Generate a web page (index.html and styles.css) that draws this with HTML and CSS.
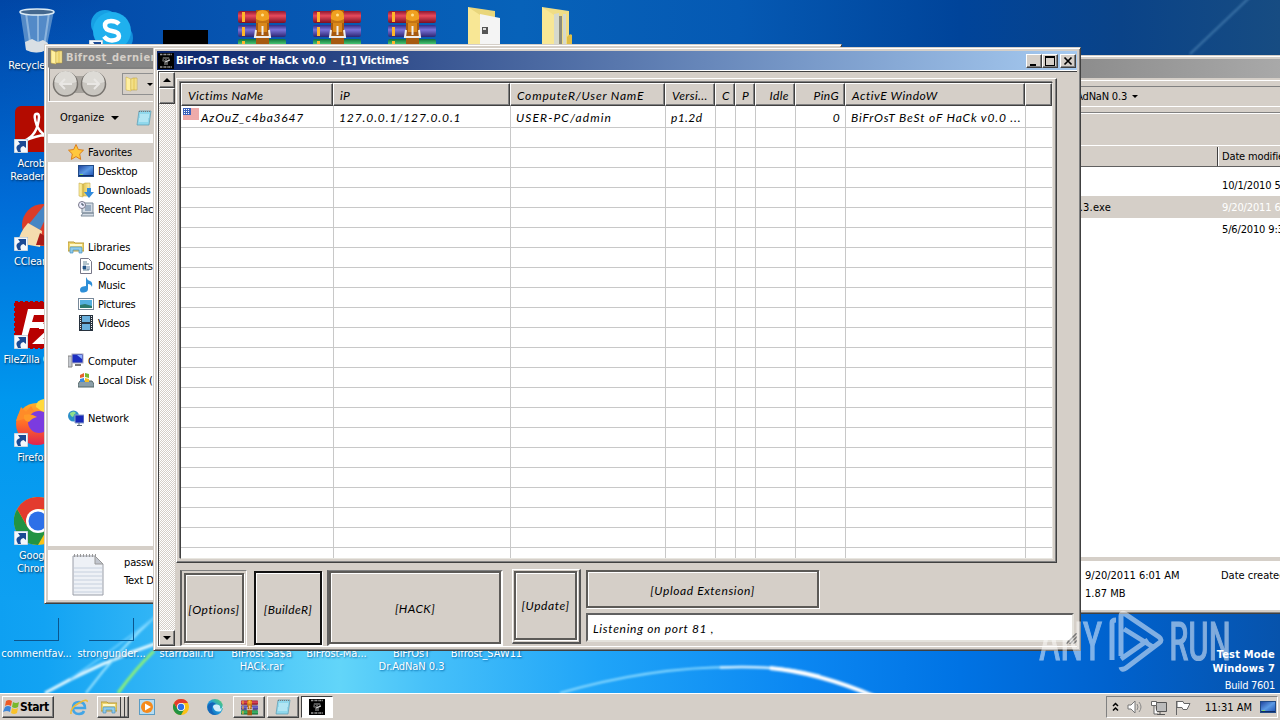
FILE: index.html
```
<!DOCTYPE html>
<html>
<head>
    <meta charset='utf-8'>
    <title>Desktop</title>
    <link rel="stylesheet" href="styles.css">
</head>
<body>
    <svg width="0" height="0" class="sprite">
        <defs>
            <linearGradient id="gold" x1="0" x2="1"><stop offset="0" stop-color="#fff3a8"/><stop offset=".5" stop-color="#e8cd62"/><stop offset="1" stop-color="#fbeeb0"/></linearGradient>
            <linearGradient id="red" x1="0" x2="0" y1="0" y2="1"><stop offset="0" stop-color="#8d1630"/><stop offset=".4" stop-color="#e84a5c"/><stop offset="1" stop-color="#7c0f24"/></linearGradient>
            <linearGradient id="blue" x1="0" x2="0" y1="0" y2="1"><stop offset="0" stop-color="#332c86"/><stop offset=".4" stop-color="#7a72d8"/><stop offset="1" stop-color="#2c2572"/></linearGradient>
            <linearGradient id="green" x1="0" x2="0" y1="0" y2="1"><stop offset="0" stop-color="#0f7038"/><stop offset=".4" stop-color="#43c070"/><stop offset="1" stop-color="#0c5c2c"/></linearGradient>
            <linearGradient id="screen" x1="0" x2="1" y1="0" y2="1"><stop offset="0" stop-color="#1c3f9c"/><stop offset=".5" stop-color="#5c9ae4"/><stop offset="1" stop-color="#1a4cae"/></linearGradient>
            <linearGradient id="fox" x1="0" x2="0" y1="0" y2="1"><stop offset="0" stop-color="#ffb02a"/><stop offset=".5" stop-color="#ff6a28"/><stop offset="1" stop-color="#e0234e"/></linearGradient>
            <linearGradient id="edge" x1="0" x2="1" y1="1" y2="0"><stop offset="0" stop-color="#0c59a4"/><stop offset=".5" stop-color="#1e9be0"/><stop offset="1" stop-color="#5fd85c"/></linearGradient>
        </defs>
        <symbol id="rar" viewBox="0 0 48 48">
            <rect x="0" y="2" width="48" height="12" rx="2" fill="url(#red)"/>
            <rect x="0" y="16" width="48" height="12" rx="2" fill="url(#blue)"/>
            <rect x="0" y="30" width="48" height="12" rx="2" fill="url(#green)"/>
            <path d="M4 3h3v10H4zM4 18h3v9H4zM4 32h3v9H4z" fill="#ffb62a"/>
            <rect x="18" y="1" width="13" height="43" fill="#a65a10"/>
            <path d="M18 7q0-6 6.500-6t6.500 6v7H18z" fill="#f0a020"/>
            <path d="M18 10q6.500 4 13 0v4H18z" fill="#c47413"/>
            <circle cx="24.500" cy="6" r="1.500" fill="#ffe08a"/>
            <rect x="20" y="14" width="9" height="9" fill="#d9881b"/>
            <path d="M18 21l-1 7h15l-1-7M24.500 17v9" fill="none" stroke="#eee" stroke-width="2"/>
        </symbol>
        <symbol id="arrow" viewBox="0 0 14 14">
            <rect width="14" height="14" fill="#f4f8fc" stroke="#9db4c8"/>
            <path d="M4 13Q0 7 6 5L4 2h8v7l-2.500-2Q5 8 7 13z" fill="#1b4a94"/>
        </symbol>
        <symbol id="folder" viewBox="0 0 16 16">
            <path d="M2 1l5 2v12l-5-1z" fill="#fff0a0" stroke="#c9a93a" stroke-width=".5"/>
            <path d="M7 3l2-1h4v12H7z" fill="url(#gold)" stroke="#b8982c" stroke-width=".5"/>
        </symbol>
        <symbol id="library" viewBox="0 0 16 16">
            <path d="M0 3h6l1 1h9v8H0z" fill="#eed56c" stroke="#b99a38"/>
            <path d="M2 5h12v2H2z" fill="#fff9cc"/>
            <path d="M2 14V9q0-1 1-1h10q1 0 1 1v5h-3v-3H5v3z" fill="#8ecbea" stroke="#4a94c4" stroke-width=".7"/>
        </symbol>
        <symbol id="monitor" viewBox="0 0 16 16">
            <rect x=".5" y="2.500" width="15" height="11" fill="url(#screen)" stroke="#214a86"/>
            <path d="M1 12h14v1H1z" fill="#0c2a68"/><path d="M2 11h3v1H2z" fill="#7fd36c"/>
        </symbol>
        <symbol id="computer" viewBox="0 0 16 16">
            <path d="M0 3h4v11H0z" fill="#c4c8ce" stroke="#888"/>
            <rect x="4" y="1" width="11" height="9" fill="#1c2ec0" stroke="#aab"/>
            <path d="M9 2h5v4z" fill="#8db0ff"/><path d="M7 11h6v2H7z" fill="#777"/>
        </symbol>
        <symbol id="network" viewBox="0 0 16 16">
            <circle cx="5.500" cy="6" r="5.500" fill="#2b8fc8"/><path d="M2 3q4-3 6 0-2 1-3 4Q2 6 2 3" fill="#8fe08a"/>
            <path d="M7 5h9v8H7z" fill="#1828b8" stroke="#8ba0c8"/><path d="M11 13v3m-2-.5h5" stroke="#567"/>
        </symbol>
        <symbol id="notepad" viewBox="0 0 16 16">
            <path d="M3 1h12l-2 14H1z" fill="#90d8ec" stroke="#5b9ab0" stroke-width=".7"/>
            <path d="M4 5h9M4 7h9M3 9h9M3 11h9" stroke="#e6fbff" stroke-width=".8"/>
            <path d="M3 1.500h12" stroke="#777" stroke-dasharray="1 1"/>
        </symbol>
        <symbol id="chrome" viewBox="0 0 48 48">
            <circle cx="24" cy="24" r="24" fill="#fbc116"/>
            <path d="M3.200 12A24 24 0 0 1 44.800 12H24z" fill="#e33b2e"/>
            <path d="M3.200 12A24 24 0 0 0 24 48L34.400 30 24 24 13.600 30z" fill="#229342"/>
            <path d="M3.200 12L13.600 30 24 12z" fill="#e33b2e"/>
            <circle cx="24" cy="24" r="12" fill="#fff"/><circle cx="24" cy="24" r="9.500" fill="#2d70e8"/>
        </symbol>
        <symbol id="skull" viewBox="0 0 16 16">
            <rect width="16" height="16" fill="#000"/>
            <path d="M2 1.500h12M2 14h12" stroke="#999" stroke-width="1.500" stroke-dasharray="2 .6 1 .5"/>
            <path d="M5 4h6l1 3-2 2v3H6V9L4 8z" fill="#555"/><path d="M6 6h1v1H6zM9 6h1v1H9z" fill="#000"/>
            <path d="M7 9l5-2" stroke="#ddd"/>
        </symbol>
    </svg>

    <div class="desktop">
        <svg class="wallpaper" viewBox="0 0 1280 720">
            <defs><filter id="soft"><feGaussianBlur stdDeviation="1.2"/></filter></defs>
            <g fill="none" filter="url(#soft)">
                <path d="M45 693Q100 662 160 642" stroke="#dff8ff" stroke-width="3"/>
                <path d="M86 693Q118 650 160 612" stroke="#9fe6ff" stroke-width="2"/>
                <path d="M118 693Q136 668 154 651" stroke="#8af07a" stroke-width="3"/>
                <path d="M70 679Q120 645 156 616" stroke="#62ccff" stroke-width="2"/>
                <path d="M560 693Q650 667 735 667" stroke="#8fdcff" stroke-width="2"/>
                <path d="M720 667.500Q780 665 820 676" stroke="#d8f2ff" stroke-width="2.500"/>
                <path d="M770 668Q820 673 876 697" stroke="#fff" stroke-width="4"/>
                <path d="M1190 54L1250 -3" stroke="#3d74a8" stroke-width="2"/>
            </g>
        </svg>

        <div class="shortcut bin">
            <svg width="38" height="46" viewBox="0 0 38 46">
                <path d="M2 3L8 42q10 5 20 0L36 3z" fill="#6f9fd0" fill-opacity=".75"/>
                <path d="M8 5l5 36M20 5v38M31 5l-5 34" stroke="#c4ddf2" stroke-width="2" opacity=".5"/>
                <ellipse cx="19" cy="4" rx="17" ry="3" fill="#44688e" stroke="#dcebf5" stroke-width="1.500"/>
                <path d="M7 34l7-3 6 3 5-2 5 3-2 7q-9 5-20 0z" fill="#d9dfe4"/>
            </svg>
            <span>Recycle Bin</span>
        </div>
        <div class="shortcut acrobat">
            <svg width="48" height="48" viewBox="0 0 48 48">
                <rect x="1" y="1" width="46" height="46" rx="6" fill="#b30b00"/>
                <path d="M10 36q14-6 15-24 0-4-3-3t1 12q6 12 17 11-10-5-30 4" fill="none" stroke="#fff" stroke-width="2.500"/>
            </svg>
            <svg class="arrow"><use href="#arrow"/></svg>
            <span>Acrobat Reader DC</span>
        </div>
        <div class="shortcut ccleaner">
            <svg width="48" height="48" viewBox="0 0 48 48">
                <circle cx="29" cy="22" r="21" fill="#dc3c28"/><path d="M32 0l6 2-12 25-11-6z" fill="#4786c4"/>
                <path d="M14 20l14 8-2 16-22-4q1-10 10-20" fill="#f4dcae"/><path d="M26 30l18 12H22z" fill="#a81c18"/>
            </svg>
            <svg class="arrow"><use href="#arrow"/></svg>
            <span>CCleaner</span>
        </div>
        <div class="shortcut filezilla">
            <svg width="48" height="48" viewBox="0 0 48 48">
                <rect x="1" y="1" width="46" height="46" fill="#b80000" stroke="#b80000" stroke-width="2" stroke-dasharray="3 2"/>
                <path d="M7 37L14 8h24l-2 6H20l-2 7h12l-2 6H16l-3 10zM25 23h20L29 38h14v5H18l16-15h-9z" fill="#fff"/>
            </svg>
            <svg class="arrow"><use href="#arrow"/></svg>
            <span>FileZilla Client</span>
        </div>
        <div class="shortcut firefox">
            <svg width="48" height="48" viewBox="0 0 48 48">
                <circle cx="23" cy="25" r="21" fill="url(#fox)"/><path d="M2 22L7 8l5 5 5-6 6 10z" fill="#ff8b28"/>
                <path d="M22 8q0-7 8-8 12 10 14 24z" fill="#ffd83c"/><circle cx="25" cy="23" r="11" fill="#7b3be0"/>
                <path d="M10 16q7-2 13 2-5 1-8 5-6-1-5-7" fill="#ff9a28"/>
            </svg>
            <svg class="arrow"><use href="#arrow"/></svg>
            <span>Firefox</span>
        </div>
        <div class="shortcut google">
            <svg width="48" height="48"><use href="#chrome"/></svg>
            <svg class="arrow"><use href="#arrow"/></svg>
            <span>Google Chrome</span>
        </div>
        <div class="shortcut skype">
            <svg width="42" height="42" viewBox="0 0 42 42">
                <circle cx="14" cy="14" r="14" fill="#17a0e4"/><circle cx="28" cy="28" r="14" fill="#1390dc"/><circle cx="21" cy="21" r="19" fill="#1fb0ee"/>
                <path d="M28 14q-3-3-8-3-6 0-6 4.500t7 5.500 7 5-7 4.500q-5 0-8-4" fill="none" stroke="#fff" stroke-width="4.500"/>
            </svg>
            <svg class="arrow"><use href="#arrow"/></svg>
        </div>
        <div class="shortcut black"></div>
        <svg class="shortcut rar1"><use href="#rar"/></svg>
        <svg class="shortcut rar2"><use href="#rar"/></svg>
        <svg class="shortcut rar3"><use href="#rar"/></svg>
        <svg class="shortcut folder1" viewBox="0 0 34 48">
            <path d="M1 0l27 4v44H1z" fill="#e9d67c"/><path d="M13 7l20 4v37H13z" fill="#f4f4f4"/><path d="M1 0l12 8v40H1z" fill="#f8e795"/>
            <path d="M15 20h6v7h-6z" fill="#555"/><path d="M16 21h3v2h-3z" fill="#ddd"/>
        </svg>
        <svg class="shortcut folder2" viewBox="0 0 34 48">
            <path d="M1 0l27 4v44H1z" fill="#f0dd85"/><path d="M13 7l5-1v42h-5zM22 7h3v41h-3z" fill="#d6d9cc"/><path d="M18 9h3v39h-3z" fill="#8c8c7c"/>
            <path d="M1 0l12 8v40H1z" fill="#f8e795"/><path d="M26 30q3-4 5-2v20h-5z" fill="#e0bd45"/>
        </svg>
        <div class="shadow-icon first"></div>
        <div class="shadow-icon second"></div>
        <div class="labels">
            <span>commentfav...</span>
            <span>strongunder...</span>
            <span>starrball.ru</span>
            <span>BiFrost Sa$a HACk.rar</span>
            <span>BiFrost-Ma...</span>
            <span>BiFrOsT Dr.AdNaN 0.3</span>
            <span>Bifrost_SAW11</span>
        </div>

        <div class="window explorer">
            <div class="titlebar inactive"><svg class="icon"><use href="#folder"/></svg>Bifrost_dernier</div>
            <div class="address">
                <svg width="58" height="28" viewBox="0 0 58 28">
                    <rect x="3" y="6" width="48" height="17" rx="8" fill="#a8a49e"/>
                    <circle cx="13.500" cy="14" r="12" fill="#c9c6c0" stroke="#77736e" stroke-width="1.500"/>
                    <circle cx="41.500" cy="14" r="12" fill="#c9c6c0" stroke="#77736e" stroke-width="1.500"/>
                    <path d="M2.500 12a11 11 0 0 1 22 0q-11 4-22 0M30.500 12a11 11 0 0 1 22 0q-11 4-22 0" fill="#dddbd6"/>
                    <path d="M20 14H8m5-5l-5 5 5 5M35 14h12m-5-5l5 5-5 5" fill="none" stroke="#e9e7e4" stroke-width="2"/>
                </svg>
                <div class="path"><svg class="icon"><use href="#folder"/></svg><i class="caret"></i></div>
            </div>
            <div class="tools"><span>Organize</span><i class="caret wide"></i><svg class="icon"><use href="#notepad"/></svg></div>
            <div class="nav">
                <div class="group selected"><svg class="icon" viewBox="0 0 16 16"><path d="M8 .5l2.300 5 5.200.7-3.800 3.700 1 5.500L8 12.600l-4.700 2.800 1-5.500L.5 6.200l5.200-.7z" fill="#ffc83c" stroke="#dd7f1c"/></svg><span>Favorites</span></div>
                <div><svg class="icon"><use href="#monitor"/></svg><span>Desktop</span></div>
                <div><svg class="icon" viewBox="0 0 16 16"><path d="M1 1l4 1v13l-4-1zM5 2l2-1h5v13H5z" fill="url(#gold)" stroke="#b8982c" stroke-width=".5"/><path d="M9 6h4v4h3l-5 6-5-6h3z" fill="#328bdc"/></svg><span>Downloads</span></div>
                <div><svg class="icon" viewBox="0 0 16 16"><path d="M4 2h11v10H4zM5 12h11v3H3z" fill="#d3dbe4" stroke="#7d8b9a"/><path d="M7 5h6M7 7h6M7 9h6" stroke="#587698"/><circle cx="4" cy="4" r="3.500" fill="#eef" stroke="#778"/><path d="M4 2v2h2" fill="none" stroke="#345"/></svg><span>Recent Places</span></div>
                <div class="gap"></div>
                <div class="group"><svg class="icon"><use href="#library"/></svg><span>Libraries</span></div>
                <div><svg class="icon" viewBox="0 0 16 16"><path d="M2.500.5h8l3 3v12h-11z" fill="#fff" stroke="#778"/><path d="M5 4h4M5 6h6M5 12h6" stroke="#689"/><path d="M5 8h3v3H5zM9 9h3M9 11h3" fill="#258" stroke="#258" stroke-width=".7"/></svg><span>Documents</span></div>
                <div><svg class="icon" viewBox="0 0 16 16"><path d="M8 0q1 3 4 4t2 6q-1-3-4-3v5q0 3-4 3.500T2 13t3-3.500l3-.5z" fill="#2d8fd8"/></svg><span>Music</span></div>
                <div><svg class="icon" viewBox="0 0 16 16"><rect x=".5" y="2.500" width="15" height="11" fill="#fff" stroke="#789"/><path d="M2 4h12v8H2z" fill="#54b0e0"/><path d="M2 9l5-1 7 2v2H2z" fill="#2c7a6c"/></svg><span>Pictures</span></div>
                <div><svg class="icon" viewBox="0 0 16 16"><rect x="1" y="0" width="14" height="16" fill="#27323e"/><path d="M4 1h8v6H4zM4 9h8v6H4z" fill="#6ab0dc"/><path d="M2.500 1v14M13.500 1v14" stroke="#eee" stroke-dasharray="1 1"/></svg><span>Videos</span></div>
                <div class="gap"></div>
                <div class="group"><svg class="icon"><use href="#computer"/></svg><span>Computer</span></div>
                <div><svg class="icon" viewBox="0 0 16 16"><path d="M2 9h12l2 3v3H0v-3z" fill="#8a9ea8" stroke="#566"/><path d="M2 3l4-2v4l-4 1z" fill="#e8622c"/><path d="M7 1l4 1v4L7 5z" fill="#7cb82f"/><path d="M2 7l4-1v4H2z" fill="#3a8ae0"/><path d="M7 6l4 1v3H7z" fill="#f8c020"/></svg><span>Local Disk (C:)</span></div>
                <div class="gap"></div>
                <div class="group"><svg class="icon"><use href="#network"/></svg><span>Network</span></div>
            </div>
            <div class="details">
                <svg width="32" height="42" viewBox="0 0 32 42"><path d="M1 2h22l8 8v31H1z" fill="#eef1f6" stroke="#9a9ea8"/><path d="M23 2v8h8z" fill="#c2c6ce" stroke="#999"/><path d="M2 14h28M2 18h28M2 22h28M2 26h28M2 30h28M2 34h28M2 38h28" stroke="#c6d0de"/><path d="M2 1.500h22" stroke="#999" stroke-width="3" stroke-dasharray="1 2"/></svg>
                <div><p>password</p><p>Text Document</p></div>
            </div>
        </div>

        <div class="window folder-window">
            <div class="titlebar inactive"></div>
            <div class="address"><span>Dr.AdNaN 0.3</span><i class="caret"></i></div>
            <div class="tools"></div>
            <div class="columns"><div></div><div>Date modified</div></div>
            <div class="files">
                <div><span></span><span>10/1/2010 5:12 PM</span></div>
                <div class="selected"><span>Dr.AdNaN 0.3.exe</span><span>9/20/2011 6:01 AM</span></div>
                <div><span></span><span>5/6/2010 9:30 AM</span></div>
            </div>
            <div class="details">
                <div><p>9/20/2011 6:01 AM</p><p>1.87 MB</p></div>
                <div><p>Date created</p></div>
            </div>
        </div>

        <div class="window main">
            <div class="titlebar">
                <svg class="icon"><use href="#skull"/></svg>
                <span>BiFrOsT BeSt oF HaCk v0.0  - [1] VictimeS</span>
                <div class="controls">
                    <svg class="raised" viewBox="0 0 12 10"><path d="M2 8h6v2H2z"/></svg>
                    <svg class="raised" viewBox="0 0 12 10"><path d="M1 0h10v10H1zM2 2v7h8V2z" fill-rule="evenodd"/></svg>
                    <svg class="raised close" viewBox="0 0 12 10"><path d="M2.500 1.500l7 7m0-7l-7 7" stroke="#000" stroke-width="1.700"/></svg>
                </div>
            </div>
            <div class="client">
                <div class="scroll">
                    <div class="raised step"><i class="up"></i></div>
                    <div class="raised thumb"></div>
                    <div class="raised step"><i class="caret wide"></i></div>
                </div>
                <div class="content">
                    <div class="panel">
                        <div class="list">
                            <div class="list-head">
                                <div class="w1">Victims NaMe</div><div>iP</div><div class="w2">ComputeR/User NamE</div><div class="w3">Versi...</div><div>C</div><div>P</div><div class="right">Idle</div><div class="right">PinG</div><div class="w4">ActivE WindoW</div><div></div>
                            </div>
                            <div class="row">
                                <div class="name"><svg width="16" height="12" viewBox="0 0 16 12"><rect width="16" height="12" fill="#fff"/><path d="M0 1h16M0 3h16M0 5h16M0 7h16M0 9h16M0 11h16" stroke="#dd5656"/><rect width="8" height="7" fill="#3c62bc"/><path d="M1 1.500h6M1 3.500h6M1 5.500h6" stroke="#fff" stroke-dasharray="1 1"/></svg><span>AzOuZ_c4ba3647</span></div>
                                <div class="ip">127.0.0.1/127.0.0.1</div><div class="user">USER-PC/admin</div><div class="ver">p1.2d</div><div></div><div></div><div></div><div class="right">0</div><div class="active">BiFrOsT BeSt oF HaCk v0.0 ...</div><div></div>
                            </div>
                            <div class="rows"></div>
                        </div>
                    </div>
                    <div class="actions">
                        <div class="well options"><div class="button">[Options]</div></div>
                        <div class="button builder">[BuildeR]</div>
                        <div class="well hack"><div class="button">[HACK]</div></div>
                        <div class="update"><div class="button">[Update]</div></div>
                        <div class="status">
                            <div class="button upload">[Upload Extension]</div>
                            <div class="listen">Listening on port 81 ,</div>
                        </div>
                    </div>
                </div>
                <svg class="grip" viewBox="0 0 12 12"><path d="M0 12L12 0M4 12l8-8M8 12l4-4" stroke="#777" stroke-width="1.700"/></svg>
            </div>
        </div>

        <svg class="watermark" viewBox="0 0 194 64">
            <g fill="#fff" stroke="#fff" stroke-width="1.200" font-family="Roboto" font-size="53" opacity=".5">
                <text x="1" y="50" textLength="63" lengthAdjust="spacingAndGlyphs">ANY</text>
                <text x="131" y="50" textLength="62" lengthAdjust="spacingAndGlyphs">RUN</text>
            </g>
            <path d="M74 50V13q0-3 4-3M83 46V6q0-4 4-2l34 23q4 3 0 6L88 58q-4 3-5-1M86 19l29 18M83 49l27-19" fill="none" stroke="#fff" stroke-width="5" opacity=".5"/>
        </svg>
        <div class="build"><b>Test Mode</b><b>Windows 7</b><span>Build 7601</span></div>
    </div>

    <div class="taskbar">
        <div class="raised start"><svg width="17" height="16" viewBox="0 0 17 16"><path d="M3 2q3-2 6 0L8 7Q5 5 2 7z" fill="#ee5a24"/><path d="M10 3q3 2 6 0l-1 5q-3 2-6 0z" fill="#78b82c"/><path d="M2 8q3-2 6 0l-1 5Q4 11 0 13z" fill="#3d86d8"/><path d="M9 9q3 2 6 0l-1 5q-3 2-6 0z" fill="#f9c22a"/></svg>Start</div>
        <div class="task"><svg width="18" height="18" viewBox="0 0 18 18"><path d="M4 10h11q0-6-6-6T3 10t6 6q4 0 5-3" fill="none" stroke="#42a5e6" stroke-width="2.500"/><path d="M1 16Q0 10 9 5t8-1" fill="none" stroke="#eebb35" stroke-width="1.500"/></svg></div>
        <div class="task raised stacked"><svg class="icon"><use href="#library"/></svg><i></i><i></i></div>
        <div class="task"><svg width="16" height="16" viewBox="0 0 16 16"><rect x=".5" y=".5" width="15" height="15" fill="#b6dcf2" stroke="#5a9cc4"/><circle cx="8" cy="8" r="6" fill="#f58a1c"/><path d="M6 4.500l6 3.500-6 3.500z" fill="#fff"/></svg></div>
        <div class="task"><svg width="16" height="16"><use href="#chrome"/></svg></div>
        <div class="task"><svg width="16" height="16" viewBox="0 0 16 16"><circle cx="8" cy="8" r="8" fill="url(#edge)"/><path d="M6 8q0-3 4-2.500t3 4l3-.5q0-1 0-3L14 12q-6 2-8-4" fill="#d4eefa"/><path d="M1 6q4-5 8-1-4 0-4 5t5 6Q0 16 1 6" fill="#1565b8"/></svg></div>
        <div class="task raised"><svg width="17" height="17" viewBox="0 0 48 44"><use href="#rar" width="48" height="48"/></svg></div>
        <div class="task raised"><svg class="icon"><use href="#notepad"/></svg></div>
        <div class="task pressed"><svg class="icon"><use href="#skull"/></svg></div>
        <div class="tray">
            <svg width="7" height="10" viewBox="0 0 7 10"><path d="M1 4l2.500-2.500L6 4M1 8.500L3.500 6 6 8.500" fill="none" stroke="#000" stroke-width="1.500"/></svg>
            <svg width="16" height="14" viewBox="0 0 16 14"><path d="M1 5h3l4-4v12L4 9H1z" fill="#fff" stroke="#777"/><path d="M10 4q2 3 0 6M12 2q4 5 0 10" fill="none" stroke="#888"/></svg>
            <svg width="16" height="15" viewBox="0 0 16 15"><path d="M5.500 2.500h10v9h-10zM9 12v2.500M6 14.500h8" fill="#bbb" stroke="#555"/><path d="M.5 1.500h5v4h-5zM3 6v8h4" fill="#fff" stroke="#666"/></svg>
            <svg width="16" height="15" viewBox="0 0 16 15"><path d="M1.500 1v14M2 1.500h6l1 2h6l-3 6H8l-1-2H2z" fill="#fff" stroke="#666"/></svg>
            <span>11:31 AM</span>
            <svg class="icon"><use href="#monitor"/></svg>
        </div>
    </div>
</body>
</html>
```
FILE: styles.css
```
* {
    box-sizing: border-box;
}
body {
    margin: 0;
    width: 1280px;
    height: 720px;
    overflow: hidden;
    font-family: "DejaVu Sans Condensed", "DejaVu Sans", sans-serif;
    font-stretch: condensed;
    font-size: 11px;
    letter-spacing: -0.15px;
    color: #000;
}
p {
    margin: 0;
}
svg {
    display: block;
    flex: none;
}
.sprite {
    position: absolute;
}
.icon {
    width: 16px;
    height: 16px;
}
.desktop {
    position: relative;
    height: 693px;
    overflow: hidden;
    background:
        linear-gradient(90deg, #0ea0f2 0, #12a3f3 44px, #39b9f6 180px, #62d5f9 340px, #46c0f9 430px, #1fa4f8 600px, #0b87f2 800px, #0073e4 960px, #0062ce 1110px, #0753ac 1280px) 0 600px / 100% 93px no-repeat,
        linear-gradient(180deg, rgba(0,70,165,0) 0, rgba(0,112,220,.9) 200px, #0097ee 400px, #0ea0f2 600px) 0 0 / 100px 600px no-repeat,
        linear-gradient(90deg, #0046a6 0, #0654b0 230px, #0762b9 520px, #0559b3 740px, #00449a 960px, #0a4388 1120px, #174c82 1280px);
}
.wallpaper {
    position: absolute;
    width: 1280px;
    height: 720px;
}

/* desktop icons */
.shortcut {
    position: absolute;
    color: #fff;
    text-align: center;
    line-height: 13px;
    text-shadow: 1px 1px 2px #024;
}
.shortcut .arrow {
    position: absolute;
    left: 0;
    top: 34px;
    width: 14px;
    height: 14px;
}
.shortcut span {
    display: block;
    width: 74px;
    margin: 2px 0 0 -15px;
}
.bin { left: 18px; top: 8px; }
.bin span { margin: 5px 0 0 -19px; }
.acrobat { left: 14px; top: 105px; }
.acrobat span { margin-top: 4px; padding: 0 7px; }
.ccleaner { left: 14px; top: 203px; }
.ccleaner span { margin-top: 4px; }
.filezilla { left: 14px; top: 301px; }
.filezilla span { width: 84px; margin: 4px 0 0 -19px; }
.firefox { left: 14px; top: 399px; }
.firefox span { width: 68px; margin-top: 4px; }
.google { left: 14px; top: 497px; }
.google span { margin-top: 4px; padding: 0 13px; }
.skype { left: 91px; top: 10px; }
.skype .arrow { left: -2px; top: 30px; }
.black { left: 163px; top: 30px; width: 45px; height: 40px; background: #000; }
.rar1, .rar2, .rar3 { top: 9px; width: 48px; height: 48px; }
.rar1 { left: 238px; }
.rar2 { left: 313px; }
.rar3 { left: 388px; }
.folder1, .folder2 { top: 7px; width: 34px; height: 48px; }
.folder1 { left: 467px; }
.folder2 { left: 541px; }
.shadow-icon {
    position: absolute;
    top: 618px;
    width: 45px;
    height: 23px;
    border: solid #0b568e;
    border-width: 0 1px 1px 0;
}
.first { left: 14px; }
.second { left: 89px; }
.labels {
    position: absolute;
    left: -1px;
    top: 647px;
    display: flex;
    color: #fff;
    text-align: center;
    line-height: 13px;
    letter-spacing: -0.05px;
    text-shadow: 1px 1px 2px #0468a8;
}
.labels span {
    width: 75px;
}
.build {
    position: absolute;
    right: 5px;
    top: 648px;
    display: flex;
    flex-direction: column;
    align-items: flex-end;
    line-height: 15px;
    color: #fff;
    letter-spacing: 0.2px;
}
.build b {
    line-height: 14px;
}
.build span {
    margin-top: 2px;
    letter-spacing: -0.3px;
}

/* windows */
.window {
    position: absolute;
    background: #d5cfc8;
    border: 1px solid #d5cfc8;
    border-right-color: #404040;
    border-bottom-color: #404040;
    box-shadow: inset 1px 1px #fff, inset -1px -1px #808080;
    padding: 3px;
}
.titlebar {
    height: 19px;
    display: flex;
    align-items: center;
    color: #fff;
    font-weight: bold;
    white-space: pre;
    background: linear-gradient(90deg, #0a246a, #a6caf0);
}
.titlebar .icon {
    margin: 0 2px 0 1px;
}
.inactive {
    background: linear-gradient(90deg, #808080, #b8b8b8);
    color: #d5cfc8;
}
.raised {
    background: #d5cfc8;
    border: 1px solid #fff;
    border-right-color: #404040;
    border-bottom-color: #404040;
    box-shadow: inset -1px -1px #808080;
}
.caret {
    border: 3px solid transparent;
    border-top-color: #000;
    border-bottom: 0;
}
.wide {
    border-width: 4px 4px 0;
}
.explorer {
    left: 44px;
    top: 44px;
    width: 798px;
    height: 560px;
    display: flex;
    flex-direction: column;
}
.explorer .titlebar {
    padding-left: 1px;
    letter-spacing: 0.45px;
}
.explorer .titlebar .icon {
    margin: 0 1px 0 0;
}
.explorer .address {
    height: 35px;
    border: 1px solid #fff;
    border-top: 1px solid #808080;
    box-shadow: inset 1px 1px #808080;
    display: flex;
    align-items: center;
    gap: 12px;
    padding-left: 3px;
}
.path {
    display: flex;
    align-items: center;
    gap: 7px;
    height: 22px;
    flex: 1;
    border: 1px solid #909090;
    padding-left: 1px;
}
.explorer .tools {
    height: 32px;
    display: flex;
    align-items: center;
    padding-left: 12px;
    letter-spacing: 0;
}
.explorer .tools .wide {
    margin: 0 17px 0 7px;
}
.nav {
    height: 414px;
    padding-top: 9px;
    background: #fff;
}
.nav div {
    height: 19px;
    display: flex;
    align-items: center;
    gap: 4px;
    padding-left: 30px;
    letter-spacing: -0.2px;
}
.nav span {
    padding-top: 1px;
}
.nav .group {
    padding-left: 20px;
    letter-spacing: -0.05px;
}
.selected {
    background: #d5cfc8;
}
.details {
    flex: 1;
    display: flex;
    background: #fff;
    border-top: 4px solid #d5cfc8;
    line-height: 18px;
}
.explorer .details {
    padding: 4px 24px;
    gap: 20px;
}
.folder-window {
    left: 1000px;
    top: 55px;
    width: 300px;
    height: 559px;
    display: flex;
    flex-direction: column;
}
.folder-window .titlebar {
    background: linear-gradient(90deg, #828282, #ababab);
}
.folder-window .address {
    margin-top: 2px;
    height: 33px;
    display: flex;
    align-items: center;
    gap: 5px;
    border-top: 1px solid #fff;
    border-bottom: 1px solid #808080;
    box-shadow: inset 0 5px #d5cfc8, inset 0 6px #808080, inset 0 -5px #d5cfc8, inset 0 -6px #fff;
}
.folder-window .address span {
    width: 123px;
    text-align: right;
    letter-spacing: -0.2px;
}
.folder-window .tools {
    height: 32px;
    border-top: 1px solid #fff;
}
.columns {
    height: 22px;
    display: flex;
    align-items: center;
    border-top: 1px solid #fff;
    border-bottom: 1px solid #606060;
}
.columns div {
    width: 214px;
    height: 19px;
    flex: none;
    line-height: 20px;
    border-right: 1px solid #404040;
}
.columns div + div {
    border-left: 1px solid #fff;
    border-right: 0;
    padding-left: 3px;
}
.files {
    height: 390px;
    padding-top: 7px;
    background: #fff;
}
.files div {
    height: 22px;
    display: flex;
    align-items: center;
    white-space: nowrap;
}
.files span {
    width: 218px;
    flex: none;
}
.files span:first-child {
    padding-right: 111px;
    text-align: right;
    letter-spacing: 0.2px;
}
.files .selected span:last-child {
    color: #fff;
}
.folder-window .details {
    padding: 6px 0 0 81px;
    white-space: nowrap;
    letter-spacing: 0;
}
.folder-window .details div {
    width: 136px;
    flex: none;
}

/* main window */
.main {
    left: 153px;
    top: 47px;
    width: 928px;
    height: 604px;
}
.main .titlebar span {
    letter-spacing: 0.03px;
}
.controls {
    display: flex;
    margin-left: auto;
    padding-right: 1px;
}
.controls svg {
    width: 16px;
    height: 14px;
    padding: 1px;
}
.controls .close {
    margin-left: 2px;
}
.client {
    position: relative;
    height: 577px;
    display: flex;
    border: 1px solid #fff;
    border-right: 0;
    box-shadow: inset 1px 1px #404040;
    padding: 1px 0 0 1px;
}
.scroll {
    width: 16px;
    height: 574px;
    display: flex;
    flex-direction: column;
    background: repeating-conic-gradient(#fff 0 25%, #d5cfc8 0 50%) 0 0 / 2px 2px;
}
.step {
    height: 16px;
    display: flex;
    align-items: center;
    justify-content: center;
}
.thumb {
    height: 16px;
    margin-bottom: auto;
}
.up {
    border: 4px solid transparent;
    border-top: 0;
    border-bottom-color: #000;
}
.content {
    flex: 1;
    padding: 6px 0 0 1px;
    font-family: Lato, sans-serif;
    font-style: italic;
    font-size: 12px;
    letter-spacing: 0.4px;
}
.panel {
    width: 881px;
    height: 485px;
    border: 1px solid #fff;
    border-right-color: #404040;
    border-bottom-color: #404040;
    box-shadow: inset -1px -1px #808080;
    padding: 3px;
}
.list {
    width: 873px;
    height: 477px;
    border: 1px solid #404040;
    border-right: 1px solid #e8e6e0;
    border-bottom: 1px solid #e8e6e0;
    box-shadow: -1px -1px #808080;
    background: #fff;
}
.list-head, .row {
    display: grid;
    grid-template-columns: 152px 177px 155px 50px 20px 20px 40px 50px 180px 1fr;
    white-space: nowrap;
}
.list-head div {
    height: 23px;
    line-height: 23px;
    padding-left: 6px;
    background: #d5cfc8;
    border-top: 1px solid #fff;
    border-left: 1px solid #fff;
    border-right: 1px solid #404040;
    border-bottom: 1px solid #404040;
    box-shadow: inset -1px -1px #808080;
}
.list .right {
    text-align: right;
    padding-right: 5px;
}
.row {
    padding-left: 1px;
    border-bottom: 1px solid #c8c8c8;
}
.row div {
    height: 21px;
    line-height: 24px;
    padding-left: 5px;
    border-right: 1px solid #c8c8c8;
}
.row div:last-child {
    border-right: 0;
}
.row .name {
    display: flex;
    gap: 2px;
    padding: 2px 0 0 1px;
    line-height: 20px;
}
/* empty rows with the column lines drawn through them */
.rows {
    height: 430px;
    background:
        linear-gradient(90deg, transparent 152px, #c8c8c8 152px 153px, transparent 153px 329px, #c8c8c8 329px 330px, transparent 330px 484px, #c8c8c8 484px 485px, transparent 485px 534px, #c8c8c8 534px 535px, transparent 535px 554px, #c8c8c8 554px 555px, transparent 555px 574px, #c8c8c8 574px 575px, transparent 575px 614px, #c8c8c8 614px 615px, transparent 615px 664px, #c8c8c8 664px 665px, transparent 665px 844px, #c8c8c8 844px 845px, transparent 845px),
        repeating-linear-gradient(#fff 0 19px, #c8c8c8 19px 20px);
}
.w1 { letter-spacing: 0.45px; }
.w2 { letter-spacing: 0.8px; }
.w4 { letter-spacing: 0.55px; }
.name span { letter-spacing: 0.8px; }
.ip { letter-spacing: 0.9px; }
.user { letter-spacing: 1.1px; }
.active { letter-spacing: 0.85px; }
.actions {
    display: flex;
    align-items: flex-start;
    padding: 6px 0 0 4px;
    white-space: nowrap;
}
.well {
    height: 76px;
    margin-top: 1px;
    border: 1px solid #fff;
    border-left: 2px solid #606060;
    border-top: 1px solid #808080;
    padding: 2px;
}
.button {
    height: 100%;
    display: flex;
    justify-content: center;
    align-items: center;
    padding-top: 2px;
    border: 2px solid #5c5a57;
    box-shadow: inset 1px 1px #fff, 1px 1px #fff;
}
.options {
    width: 67px;
    letter-spacing: 0.6px;
}
.builder {
    width: 68px;
    height: 74px;
    margin: 2px 5px 0 7px;
    border: 2px solid #111;
}
.hack {
    width: 176px;
    padding: 0 1px 1px 0;
}
.update {
    width: 69px;
    height: 75px;
    margin: 0 5px 0 9px;
    border: 1px solid #fff;
    border-right: 2px solid #555;
    border-bottom: 2px solid #555;
    padding: 1px 2px 2px 1px;
}
.update .button {
    padding-top: 0;
    letter-spacing: 0.6px;
}
.status {
    width: 488px;
    padding-top: 1px;
}
.upload {
    width: 233px;
    height: 38px;
    letter-spacing: 0.6px;
}
.listen {
    height: 29px;
    margin-top: 5px;
    padding-left: 5px;
    line-height: 27px;
    background: #fff;
    border: 2px solid #606060;
    border-right: 2px solid #e4e2dc;
    border-bottom: 2px solid #e4e2dc;
    letter-spacing: 0.7px;
}
.grip {
    position: absolute;
    right: 0;
    bottom: 2px;
    width: 11px;
    height: 11px;
}
.watermark {
    position: absolute;
    left: 1038px;
    top: 610px;
    width: 194px;
    height: 64px;
}

/* taskbar */
.taskbar {
    height: 27px;
    display: flex;
    align-items: center;
    gap: 2px;
    padding: 0 2px;
    background: #d5cfc8;
    border-top: 1px solid #fff;
}
.start {
    width: 52px;
    height: 22px;
    margin-right: 7px;
    display: flex;
    align-items: center;
    font-weight: bold;
    font-size: 12px;
    letter-spacing: -0.4px;
}
.task {
    width: 32px;
    height: 22px;
    display: flex;
    align-items: center;
    justify-content: center;
}
.stacked {
    gap: 3px;
    justify-content: flex-end;
    padding-right: 3px;
}
.stacked i {
    width: 1px;
    height: 20px;
    background: #404040;
}
.pressed {
    background: #fff;
    border: 1px solid #404040;
    border-right-color: #fff;
    border-bottom-color: #fff;
}
.tray {
    width: 172px;
    height: 22px;
    margin-left: auto;
    display: flex;
    align-items: center;
    gap: 8px;
    padding-left: 5px;
    border: 1px solid #808080;
    border-right-color: #fff;
    border-bottom-color: #fff;
    letter-spacing: 0;
}
.tray span {
    margin-left: 6px;
}
```
